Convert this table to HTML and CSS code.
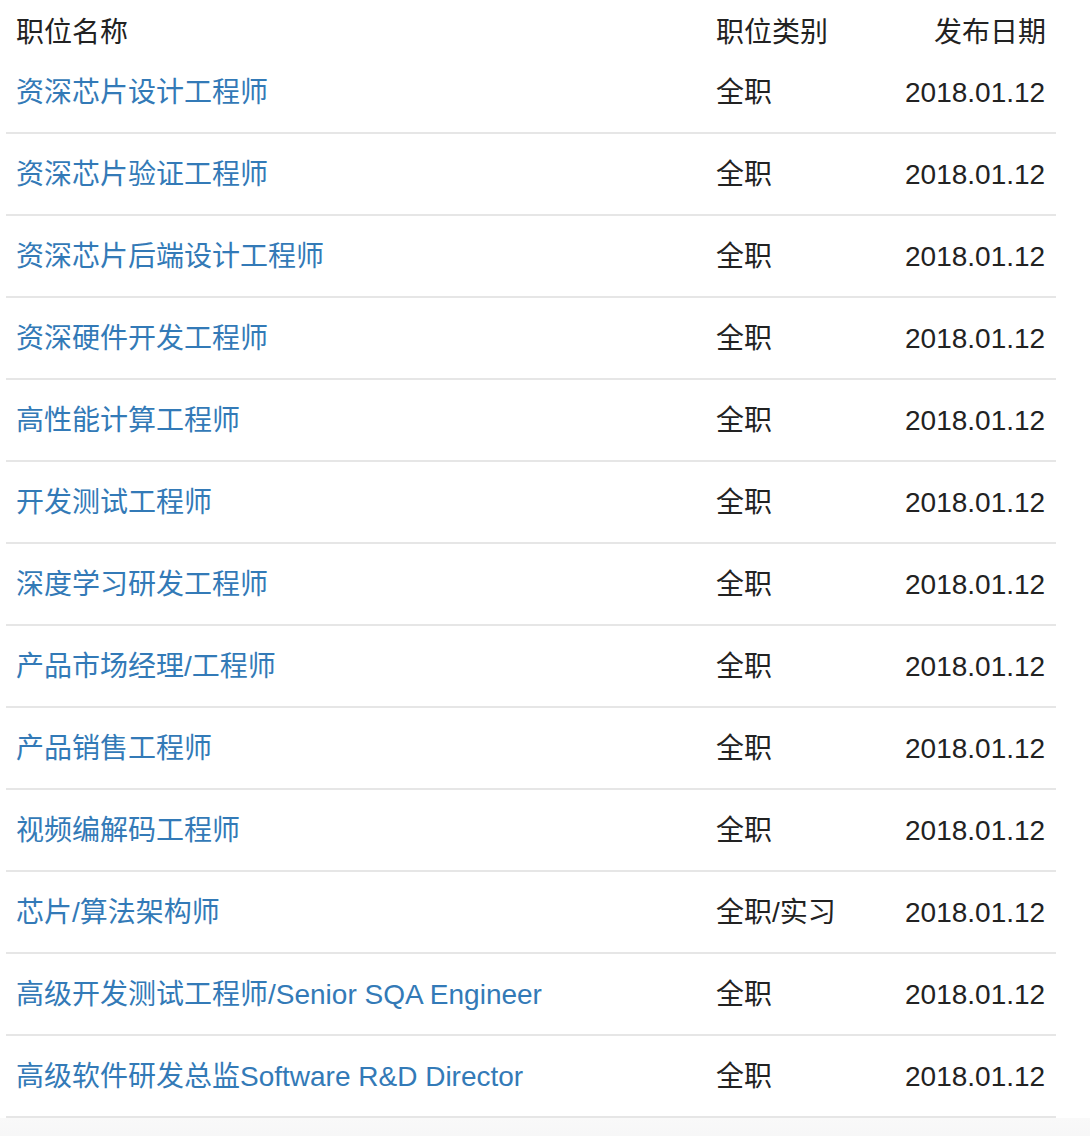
FILE: index.html
```html
<!DOCTYPE html>
<html lang="zh-CN">
<head>
<meta charset="utf-8">
<title>职位列表</title>
<link rel="stylesheet" href="styles.css">
</head>
<body>
<div class="wrap">
<table class="jobs">
<thead>
<tr><th class="c-name">职位名称</th><th class="c-type">职位类别</th><th class="c-date">发布日期</th></tr>
</thead>
<tbody>
<tr><td class="c-name"><a href="#">资深芯片设计工程师</a></td><td class="c-type">全职</td><td class="c-date">2018.01.12</td></tr>
<tr><td class="c-name"><a href="#">资深芯片验证工程师</a></td><td class="c-type">全职</td><td class="c-date">2018.01.12</td></tr>
<tr><td class="c-name"><a href="#">资深芯片后端设计工程师</a></td><td class="c-type">全职</td><td class="c-date">2018.01.12</td></tr>
<tr><td class="c-name"><a href="#">资深硬件开发工程师</a></td><td class="c-type">全职</td><td class="c-date">2018.01.12</td></tr>
<tr><td class="c-name"><a href="#">高性能计算工程师</a></td><td class="c-type">全职</td><td class="c-date">2018.01.12</td></tr>
<tr><td class="c-name"><a href="#">开发测试工程师</a></td><td class="c-type">全职</td><td class="c-date">2018.01.12</td></tr>
<tr><td class="c-name"><a href="#">深度学习研发工程师</a></td><td class="c-type">全职</td><td class="c-date">2018.01.12</td></tr>
<tr><td class="c-name"><a href="#">产品市场经理/工程师</a></td><td class="c-type">全职</td><td class="c-date">2018.01.12</td></tr>
<tr><td class="c-name"><a href="#">产品销售工程师</a></td><td class="c-type">全职</td><td class="c-date">2018.01.12</td></tr>
<tr><td class="c-name"><a href="#">视频编解码工程师</a></td><td class="c-type">全职</td><td class="c-date">2018.01.12</td></tr>
<tr><td class="c-name"><a href="#">芯片/算法架构师</a></td><td class="c-type">全职/实习</td><td class="c-date">2018.01.12</td></tr>
<tr><td class="c-name"><a href="#">高级开发测试工程师/Senior SQA Engineer</a></td><td class="c-type">全职</td><td class="c-date">2018.01.12</td></tr>
<tr><td class="c-name"><a href="#">高级软件研发总监Software R&amp;D Director</a></td><td class="c-type">全职</td><td class="c-date">2018.01.12</td></tr>
</tbody>
</table>
</div>
<div class="foot"></div>
</body>
</html>
```
FILE: styles.css
```css
html, body {
  margin: 0;
  padding: 0;
  background: #fff;
}
body {
  font-family: "Liberation Sans", "Noto Sans CJK SC", sans-serif;
  font-size: 28px;
  color: #333;
}
.wrap {
  padding-left: 6px;
}
.jobs {
  width: 1050px;
  border-collapse: collapse;
  table-layout: fixed;
}
.jobs th {
  font-weight: normal;
  text-align: left;
  padding: 13px 11px 0 10px;
  line-height: 39px;
  color: #222;
}
.jobs td {
  padding: 21px 11px 19px 10px;
  line-height: 40px;
  border-bottom: 2px solid #e6e6e6;
  color: #222;
  white-space: nowrap;
}
.c-name { width: 679px; }
.c-type { width: 168px; }
.jobs .c-date {
  text-align: right;
  padding-right: 11px;
}
.jobs th.c-date {
  padding-right: 10px;
}
.jobs a {
  color: #337ab7;
  text-decoration: none;
}
.foot {
  height: 40px;
  background: linear-gradient(#f9f9f9, #f4f4f5);
}
```
